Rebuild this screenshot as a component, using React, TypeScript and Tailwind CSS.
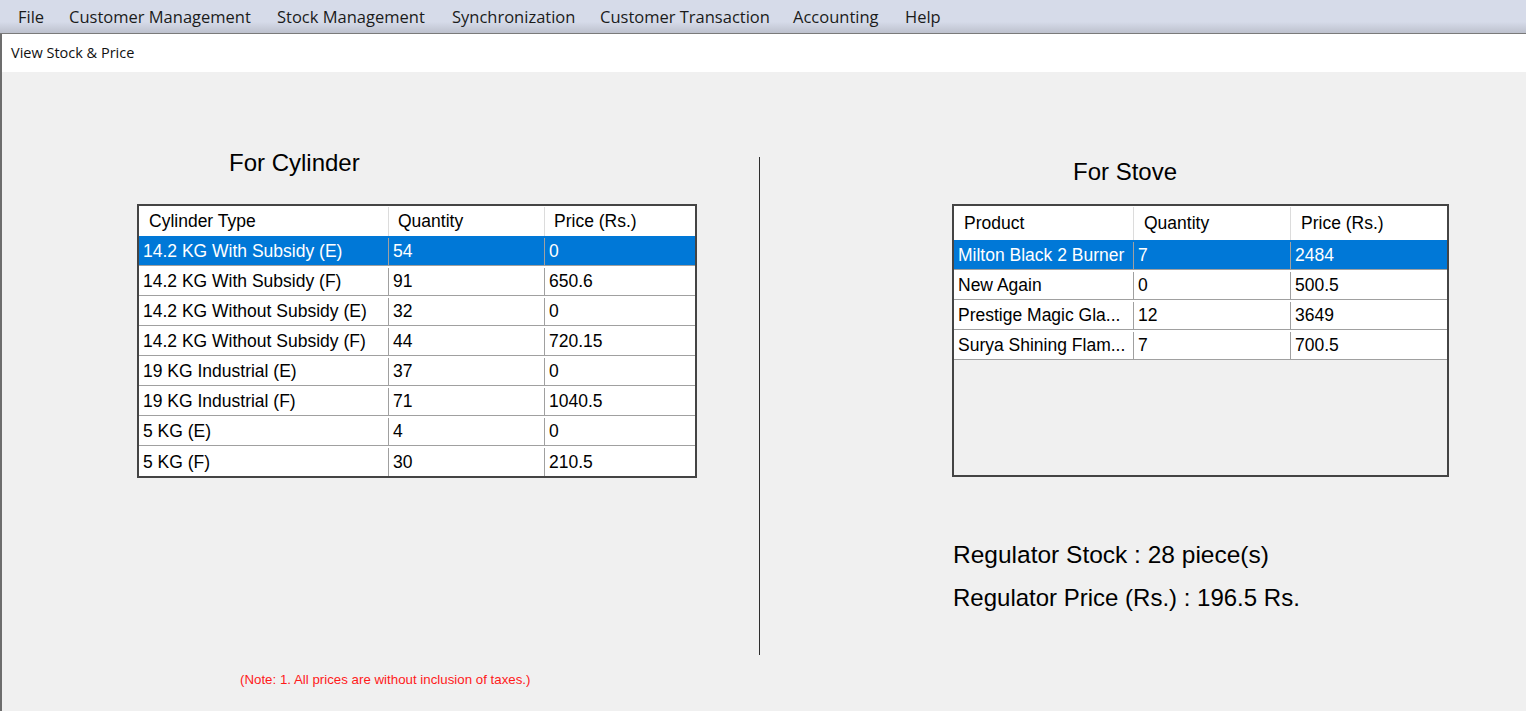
const menuItems = [
  { label: "File", w: "w-[51px]" },
  { label: "Customer Management", w: "w-[208px]" },
  { label: "Stock Management", w: "w-[175px]" },
  { label: "Synchronization", w: "w-[148px]" },
  { label: "Customer Transaction", w: "w-[193px]" },
  { label: "Accounting", w: "w-[112px]" },
  { label: "Help", w: "w-[61px]" },
];

const cylinders = [
  ["14.2 KG With Subsidy (E)", "54", "0"],
  ["14.2 KG With Subsidy (F)", "91", "650.6"],
  ["14.2 KG Without Subsidy (E)", "32", "0"],
  ["14.2 KG Without Subsidy (F)", "44", "720.15"],
  ["19 KG Industrial (E)", "37", "0"],
  ["19 KG Industrial (F)", "71", "1040.5"],
  ["5 KG (E)", "4", "0"],
  ["5 KG (F)", "30", "210.5"],
];

const stoves = [
  ["Milton Black 2 Burner", "7", "2484"],
  ["New Again", "0", "500.5"],
  ["Prestige Magic Gla...", "12", "3649"],
  ["Surya Shining Flam...", "7", "700.5"],
];

export default function App() {
  return (
    <div className="w-full h-[711px] overflow-hidden flex flex-col bg-[#f0f0f0] font-['Liberation_Sans',Arial,sans-serif] text-black">
      {/* Menu bar */}
      <div className="h-[34px] shrink-0 flex items-center pl-[5px] border-b border-[#7a7a7a] bg-[linear-gradient(to_bottom,#d6dbe9_0%,#d6dbe9_66%,#bdc1cd_100%)] font-['Open_Sans',sans-serif] text-[16.5px] text-[#1b1b1b]">
        {menuItems.map((m) => (
          <div key={m.label} className={`${m.w} pl-[13px] whitespace-nowrap leading-[33px]`}>
            {m.label}
          </div>
        ))}
      </div>

      <div className="flex-1 flex flex-col border-l-2 border-[#6d6d6d]">
        {/* Tab strip */}
        <div className="h-[38px] shrink-0 bg-white flex items-center pl-[9px] font-['Open_Sans',sans-serif] text-[14.5px] text-[#111]">
          View Stock &amp; Price
        </div>

        {/* Content */}
        <div className="flex-1 flex">
          {/* Cylinder side */}
          <div className="ml-[135px] w-[560px] flex flex-col">
            <div className="mt-[77px] ml-[92px] text-[24px] leading-[28px]">For Cylinder</div>
            <div className="mt-[27px] border-2 border-[#444] bg-white">
              <div className="grid grid-cols-[250px_156px_1fr] h-[30px] pt-[1px] text-[17.5px]">
                <div className="pl-[10px] flex items-center border-r border-[#dcdcdc]">Cylinder Type</div>
                <div className="pl-[9px] flex items-center border-r border-[#dcdcdc]">Quantity</div>
                <div className="pl-[9px] flex items-center">Price (Rs.)</div>
              </div>
              {cylinders.map((r, i) => (
                <Row key={r[0]} cells={r} selected={i === 0} cols="grid-cols-[250px_156px_1fr]" last={i === cylinders.length - 1} />
              ))}
            </div>
            <div className="mt-[194px] ml-[103px] text-[13.3px] leading-[16px] text-[#ff1a1a] whitespace-nowrap">
              (Note: 1. All prices are without inclusion of taxes.)
            </div>
          </div>

          {/* Divider */}
          <div className="ml-[62px] mt-[85px] w-px h-[498px] bg-[#2e2e2e]" />

          {/* Stove side */}
          <div className="ml-[192px] w-[497px] flex flex-col">
            <div className="mt-[86px] ml-[121px] text-[24px] leading-[28px]">For Stove</div>
            <div className="mt-[18px] h-[273px] border-2 border-[#444] bg-[#f0f0f0] flex flex-col">
              <div className="grid grid-cols-[180px_157px_1fr] h-[34px] pt-[1px] text-[17.5px] bg-white">
                <div className="pl-[10px] flex items-center border-r border-[#dcdcdc]">Product</div>
                <div className="pl-[10px] flex items-center border-r border-[#dcdcdc]">Quantity</div>
                <div className="pl-[10px] flex items-center">Price (Rs.)</div>
              </div>
              {stoves.map((r, i) => (
                <Row key={r[0]} cells={r} selected={i === 0} cols="grid-cols-[180px_157px_1fr]" last={false} />
              ))}
            </div>
            <div className="mt-[64px] ml-[1px] text-[24.5px] leading-[28px] whitespace-nowrap">
              Regulator Stock : 28 piece(s)
            </div>
            <div className="mt-[15px] ml-[1px] text-[24px] leading-[28px] whitespace-nowrap">
              Regulator Price (Rs.) : 196.5 Rs.
            </div>
          </div>
        </div>
      </div>
    </div>
  );
}

function Row({
  cells,
  selected,
  cols,
  last,
}: {
  cells: string[];
  selected: boolean;
  cols: string;
  last: boolean;
}) {
  return (
    <div
      className={`grid ${cols} h-[30px] pt-[2px] text-[17.5px] ${last ? "" : "border-b border-[#a0a0a0]"} ${
        selected ? "bg-[#0078d7] text-white" : "bg-white"
      }`}
    >
      {cells.map((c, j) => (
        <div
          key={j}
          className={`pl-[4px] flex items-center whitespace-nowrap overflow-hidden ${
            j < cells.length - 1 ? "border-r border-[#a0a0a0]" : ""
          }`}
        >
          {c}
        </div>
      ))}
    </div>
  );
}
